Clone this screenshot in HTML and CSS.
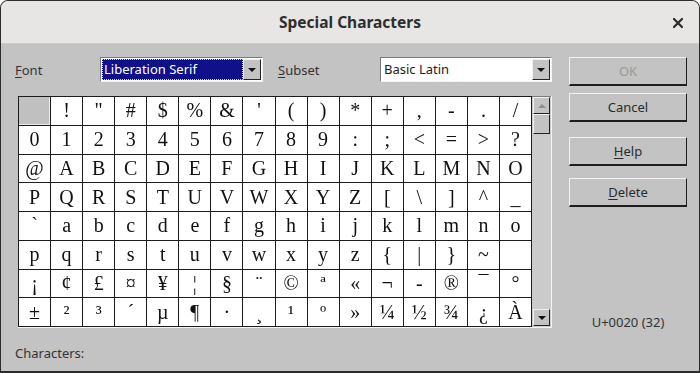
FILE: index.html
```html
<!DOCTYPE html>
<html lang="en">
<head>
    <meta charset="UTF-8">
    <meta name="viewport" content="width=device-width, initial-scale=1.0">
    <title>Special Characters</title>
    <link rel="stylesheet" href="styles.css">
</head>
<body>
    <div class="window">
        <div class="titlebar">
            <span class="title">Special Characters</span>
            <svg class="close" width="12" height="12" viewBox="0 0 12 12">
                <path d="M2 2 L10 10 M10 2 L2 10" stroke="#2a2a2a" stroke-width="2.2" stroke-linecap="round"/>
            </svg>
        </div>

        <div class="content">
            <div class="main">
                <div class="top-row">
                    <span class="label font-label"><u>F</u>ont</span>
                    <div class="combo font-combo">
                        <div class="combo-value selected">Liberation Serif</div>
                        <div class="combo-btn"><span class="tri-down"></span></div>
                    </div>
                    <span class="label subset-label"><u>S</u>ubset</span>
                    <div class="combo subset-combo">
                        <div class="combo-value">Basic Latin</div>
                        <div class="combo-btn"><span class="tri-down"></span></div>
                    </div>
                </div>

                <div class="charmap">
                    <div class="char-grid" id="char-grid">
                        <!-- cells are filled in by the script below -->
                    </div>
                    <div class="scrollbar">
                        <div class="sb-btn"><span class="tri-up"></span></div>
                        <div class="sb-thumb"></div>
                        <div class="sb-track"></div>
                        <div class="sb-btn"><span class="tri-down"></span></div>
                    </div>
                </div>

                <div class="chars-label">Characters:</div>
            </div>

            <div class="side">
                <div class="button ok disabled">OK</div>
                <div class="button cancel">Cancel</div>
                <div class="button help"><u>H</u>elp</div>
                <div class="button delete"><u>D</u>elete</div>
                <div class="code">U+0020 (32)</div>
            </div>
        </div>
    </div>

    <script>
        // One string per row, 16 glyphs each
        const rows = [
            " !\"#$%&'()*+,-./",
            "0123456789:;<=>?",
            "@ABCDEFGHIJKLMNO",
            "PQRSTUVWXYZ[\\]^_",
            "`abcdefghijklmno",
            "pqrstuvwxyz{|}~ ",
            "¡¢£¤¥¦§¨©ª«¬-®¯°",
            "±²³´µ¶·¸¹º»¼½¾¿À"
        ];

        const grid = document.getElementById("char-grid");
        rows.forEach(function (row, r) {
            Array.from(row).forEach(function (ch, c) {
                const cell = document.createElement("div");
                cell.className = "cell";
                if (r === 0 && c === 0) {
                    cell.classList.add("current");
                }
                cell.textContent = ch;
                grid.appendChild(cell);
            });
        });
    </script>
</body>
</html>
```

FILE: styles.css
```css
* {
    margin: 0;
    padding: 0;
    box-sizing: border-box;
}

body {
    background-color: #ffffff;
    font-family: 'Noto Sans', 'DejaVu Sans', sans-serif;
    color: #2b2b2b;
}

u {
    text-decoration: underline;
    text-underline-offset: 2px;
}

.window {
    width: 700px;
    height: 373px;
    border: 1px solid #2c2c2c;
    border-bottom-width: 2px;
    border-radius: 8px 8px 0 0;
    overflow: hidden;
    background-color: #c3c3c3;
    display: flex;
    flex-direction: column;
}

/* Title bar */
.titlebar {
    height: 43px;
    flex-shrink: 0;
    background-color: #e7e6e4;
    border-bottom: 1px solid #cdcdcd;
    display: flex;
    align-items: center;
    justify-content: center;
    position: relative;
}

.title {
    font-size: 15.5px;
    font-weight: bold;
    color: #2e2e2e;
}

.close {
    position: absolute;
    right: 15px;
    top: 16px;
}

/* Body */
.content {
    display: flex;
    padding-left: 14px;
    flex: 1;
}

.main {
    width: 537px;
    display: flex;
    flex-direction: column;
}

.top-row {
    margin-top: 13px;
    height: 25px;
    display: flex;
    align-items: center;
}

.label {
    font-size: 13px;
    color: #333;
}

.font-label {
    width: 85px;
}

.subset-label {
    width: 102px;
    margin-left: 15px;
}

.combo {
    height: 25px;
    display: flex;
    border-top: 1px solid #7a7a7a;
    border-left: 1px solid #7a7a7a;
    border-right: 1px solid #f4f4f4;
    border-bottom: 1px solid #f4f4f4;
    background-color: #ffffff;
    padding: 1px;
}

.font-combo {
    width: 163px;
}

.subset-combo {
    width: 172px;
}

.combo-value {
    flex: 1;
    font-size: 13px;
    line-height: 21px;
    padding-left: 2px;
    color: #222;
}

.combo-value.selected {
    background-color: #10108a;
    color: #ffffff;
    outline: 1px dotted #d0d0ff;
    outline-offset: -1px;
}

.combo-btn {
    width: 18px;
    background-color: #c3c3c3;
    border-top: 1px solid #f0f0f0;
    border-left: 1px solid #f0f0f0;
    border-right: 1px solid #222;
    border-bottom: 1px solid #222;
    display: flex;
    align-items: center;
    justify-content: center;
}

.tri-down {
    width: 0;
    height: 0;
    border-left: 4px solid transparent;
    border-right: 4px solid transparent;
    border-top: 4px solid #111;
}

.tri-up {
    width: 0;
    height: 0;
    border-left: 4px solid transparent;
    border-right: 4px solid transparent;
    border-bottom: 4px solid #8f8f8f;
}

/* Character map */
.charmap {
    margin-top: 14px;
    margin-left: 3px;
    width: 534px;
    height: 232px;
    display: flex;
    border-right: 1px solid #f4f4f4;
    border-bottom: 1px solid #f4f4f4;
}

.char-grid {
    width: 514px;
    height: 231px;
    display: grid;
    grid-template-columns: repeat(16, 1fr);
    grid-template-rows: repeat(8, 1fr);
    gap: 1px;
    padding: 1px;
    background-color: #1c1c1c;
    will-change: transform;
}

.cell {
    background-color: #ffffff;
    display: flex;
    align-items: center;
    justify-content: center;
    font-family: 'Liberation Serif', 'DejaVu Serif', serif;
    font-size: 20px;
    color: #111;
}

.cell.current {
    background-color: #c0c0c0;
    border-bottom: 1px solid #ececec;
    border-right: 1px solid #ececec;
}

.scrollbar {
    width: 19px;
    height: 231px;
    background-color: #cbcbcb;
    border-top: 1px solid #7a7a7a;
    display: flex;
    flex-direction: column;
    padding: 0 1px 1px 1px;
}

.sb-btn {
    height: 17px;
    background-color: #c3c3c3;
    border-top: 1px solid #f0f0f0;
    border-left: 1px solid #f0f0f0;
    border-right: 1px solid #222;
    border-bottom: 1px solid #222;
    display: flex;
    align-items: center;
    justify-content: center;
}

.sb-thumb {
    height: 20px;
    background-color: #c3c3c3;
    border-top: 1px solid #f0f0f0;
    border-left: 1px solid #f0f0f0;
    border-right: 1px solid #222;
    border-bottom: 1px solid #222;
}

.sb-track {
    flex: 1;
}

.chars-label {
    margin-top: 16px;
    font-size: 13px;
    color: #333;
}

/* Buttons on the right */
.side {
    margin-left: 17px;
    width: 118px;
    display: flex;
    flex-direction: column;
}

.button {
    height: 29px;
    font-size: 13px;
    color: #2b2b2b;
    background-color: #c3c3c3;
    border-top: 1px solid #f2f2f2;
    border-left: 1px solid #f2f2f2;
    border-right: 1px solid #1e1e1e;
    border-bottom: 2px solid #1e1e1e;
    display: flex;
    align-items: center;
    justify-content: center;
}

.button.disabled {
    color: #9a9a9a;
}

.ok {
    margin-top: 13px;
}

.cancel {
    margin-top: 7px;
}

.help {
    margin-top: 15px;
}

.delete {
    margin-top: 12px;
}

.code {
    margin-top: 107px;
    font-size: 13px;
    line-height: 16px;
    text-align: center;
    color: #333;
}
```
